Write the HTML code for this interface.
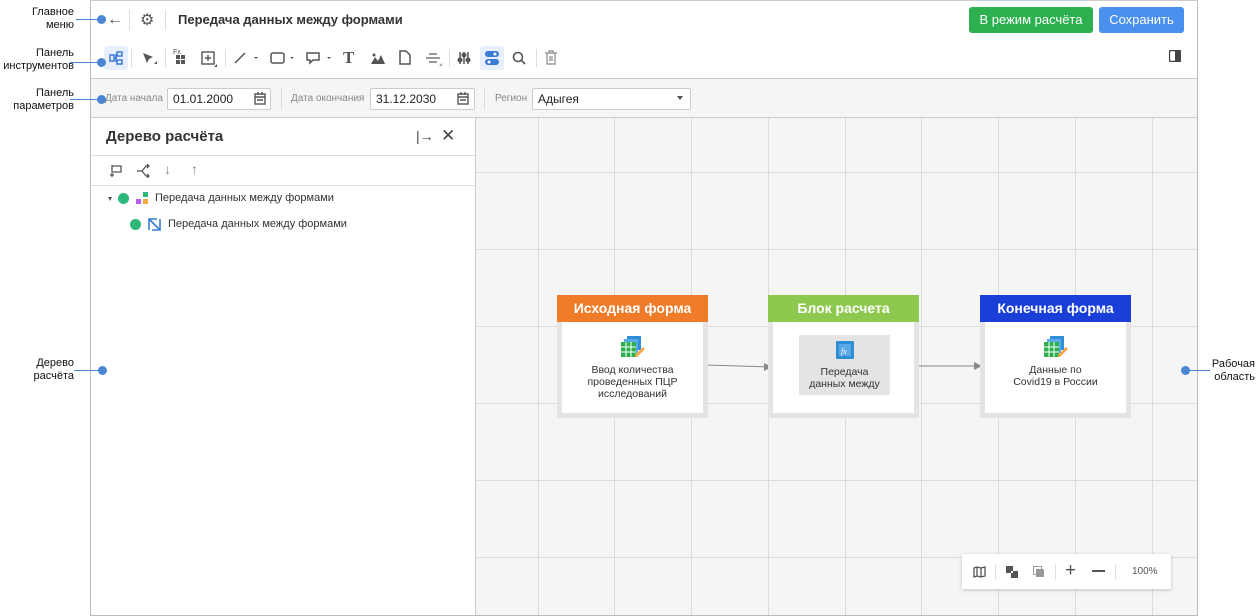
<!DOCTYPE html>
<html><head><meta charset="utf-8"><style>
*{box-sizing:border-box;margin:0;padding:0}
body{width:1256px;height:616px;background:#fff;font-family:"Liberation Sans",sans-serif;position:relative;overflow:hidden;color:#333}
.a{position:absolute}
.lbl{position:absolute;font-size:11px;line-height:13px;color:#111;text-align:right}
.dot{position:absolute;width:9px;height:9px;border-radius:50%;background:#4a86d4}
.ln{position:absolute;height:1px;background:#4a86d4}
.sep{position:absolute;width:1px;background:#ddd}
.ic{position:absolute}
.vl{position:absolute;top:118px;width:1px;height:497px;background:#dcdcdc}
.hl{position:absolute;left:476px;width:721px;height:1px;background:#dcdcdc}
.node{position:absolute;width:151px;height:123px;background:#e4e4e4}
.node .h{height:27px;color:#fff;font-weight:bold;font-size:14px;text-align:center;line-height:27px}
.node .b{position:absolute;left:5px;right:5px;top:27px;bottom:5px;background:#fff;text-align:center;font-size:10.5px;line-height:12px;color:#333}
.field{position:absolute;height:22px;border:1px solid #ccc;border-radius:2px;background:#fff;font-size:12px;line-height:20px;padding-left:5px;color:#222}
.plbl{position:absolute;font-size:10px;color:#888;top:93px}
</style></head><body>
<!-- frame -->
<div class="a" style="left:90px;top:0;width:1px;height:616px;background:#bbb"></div>
<div class="a" style="left:1197px;top:0;width:1px;height:616px;background:#bbb"></div>
<div class="a" style="left:90px;top:0;width:1108px;height:1px;background:#ccc"></div>
<div class="a" style="left:90px;top:615px;width:1108px;height:1px;background:#bbb"></div>
<!-- header -->
<div class="a" style="left:107px;top:11px;font-size:16px;color:#555">&#8592;</div>
<div class="sep" style="left:129px;top:10px;height:20px"></div>
<div class="a" style="left:140px;top:10px;font-size:16px;color:#555">&#9881;</div>
<div class="sep" style="left:165px;top:10px;height:20px"></div>
<div class="a" style="left:178px;top:12px;font-size:13px;font-weight:bold;color:#333">Передача данных между формами</div>
<div class="a" style="left:969px;top:7px;width:124px;height:26px;background:#2db150;border-radius:3px;color:#fff;font-size:13px;text-align:center;line-height:26px">В режим расчёта</div>
<div class="a" style="left:1099px;top:7px;width:85px;height:26px;background:#4a90ee;border-radius:3px;color:#fff;font-size:13px;text-align:center;line-height:26px">Сохранить</div>
<!-- toolbar -->
<div class="a" style="left:104px;top:46px;width:24px;height:24px;background:#e6effb;border-radius:3px"></div>
<svg class="ic" style="left:109px;top:51px" width="14" height="14" viewBox="0 0 14 14" fill="none" stroke="#3a7bd5" stroke-width="1.5"><rect x="1" y="4" width="4" height="6"/><rect x="8" y="1" width="5" height="4"/><rect x="8" y="9" width="5" height="4"/><path d="M5 7h3M7 3v8"/></svg>
<div class="sep" style="left:131px;top:49px;height:18px"></div>
<svg class="ic" style="left:141px;top:51px" width="16" height="16" viewBox="0 0 16 16"><path d="M2 2l10 4-4 2-2 4z" fill="#555"/><path d="M13 13h3v-3z" fill="#555"/></svg>
<div class="sep" style="left:165px;top:49px;height:18px"></div>
<div class="a" style="left:173px;top:49px;font-size:7px;color:#555">Fx</div>
<svg class="ic" style="left:176px;top:55px" width="10" height="10"><rect x="0" y="0" width="4" height="4" fill="#555"/><rect x="5" y="0" width="4" height="4" fill="#555"/><rect x="0" y="5" width="4" height="4" fill="#555"/><rect x="5" y="5" width="4" height="4" fill="#555"/></svg>
<svg class="ic" style="left:201px;top:51px" width="16" height="16" viewBox="0 0 16 16" fill="none" stroke="#555" stroke-width="1.4"><rect x="1" y="1" width="12" height="12"/><path d="M7 4v6M4 7h6"/><path d="M14 16h2v-2z" fill="#555"/></svg>
<div class="sep" style="left:225px;top:49px;height:18px"></div>
<svg class="ic" style="left:234px;top:51px" width="28" height="14" fill="none" stroke="#555" stroke-width="1.5"><path d="M1 12L11 2"/><path d="M20 6l2 2 2-2z" fill="#555" stroke="none"/></svg>
<svg class="ic" style="left:270px;top:51px" width="28" height="14" fill="none" stroke="#555" stroke-width="1.5"><rect x="1" y="2" width="13" height="10" rx="2"/><path d="M20 6l2 2 2-2z" fill="#555" stroke="none"/></svg>
<svg class="ic" style="left:306px;top:51px" width="28" height="14" fill="none" stroke="#555" stroke-width="1.5"><path d="M1 2h12v7H7l-3 3V9H1z"/><path d="M21 6l2 2 2-2z" fill="#555" stroke="none"/></svg>
<div class="a" style="left:343px;top:48px;font-size:17px;font-weight:bold;font-family:'Liberation Serif',serif;color:#555">T</div>
<svg class="ic" style="left:371px;top:52px" width="14" height="12"><path d="M0 12L4 5l3 4 3-6 4 9z" fill="#555"/><circle cx="3" cy="3" r="1.5" fill="#555"/></svg>
<svg class="ic" style="left:399px;top:50px" width="12" height="15" fill="none" stroke="#555" stroke-width="1.5"><path d="M1 1h6l4 4v9H1z"/></svg>
<svg class="ic" style="left:426px;top:52px" width="16" height="14" fill="#999"><rect x="0" y="5" width="14" height="2"/><rect x="3" y="1" width="8" height="2"/><rect x="3" y="9" width="8" height="2"/><path d="M13 14h3v-3z"/></svg>
<div class="sep" style="left:449px;top:49px;height:18px"></div>
<svg class="ic" style="left:457px;top:51px" width="14" height="14" stroke="#555" stroke-width="1.5" fill="#555"><path d="M3 1v12M11 1v12M7 1v12"/><circle cx="3" cy="9" r="1.8"/><circle cx="7" cy="4" r="1.8"/><circle cx="11" cy="9" r="1.8"/></svg>
<div class="a" style="left:480px;top:46px;width:24px;height:24px;background:#e6effb;border-radius:3px"></div>
<svg class="ic" style="left:485px;top:51px" width="14" height="14"><rect x="0" y="0" width="14" height="6" rx="3" fill="#3a7bd5"/><rect x="0" y="8" width="14" height="6" rx="3" fill="#3a7bd5"/><circle cx="10" cy="3" r="1.5" fill="#fff"/><circle cx="4" cy="11" r="1.5" fill="#fff"/></svg>
<svg class="ic" style="left:512px;top:51px" width="14" height="14" fill="none" stroke="#555" stroke-width="1.6"><circle cx="6" cy="6" r="4.5"/><path d="M9 9l4 4"/></svg>
<div class="sep" style="left:536px;top:49px;height:18px"></div>
<svg class="ic" style="left:545px;top:50px" width="12" height="15" fill="none" stroke="#999" stroke-width="1.4"><path d="M0 3h12M4 3V1h4v2M2 3v11h8V3M5 6v5M7 6v5"/></svg>
<svg class="ic" style="left:1169px;top:50px" width="12" height="12"><rect x="0.5" y="0.5" width="11" height="11" rx="1" fill="none" stroke="#444" stroke-width="1.4"/><rect x="6" y="1" width="5" height="10" fill="#444"/></svg>
<div class="a" style="left:91px;top:78px;width:1106px;height:1px;background:#ccc"></div>
<!-- params -->
<div class="a" style="left:91px;top:79px;width:1106px;height:38px;background:#f5f5f5"></div>
<div class="plbl" style="left:105px">Дата начала</div>
<div class="field" style="left:167px;top:88px;width:104px">01.01.2000</div>
<svg class="ic" style="left:254px;top:92px" width="12" height="13" fill="none" stroke="#555" stroke-width="1.4"><rect x="1" y="2" width="10" height="10"/><path d="M1 5h10M4 0v3M8 0v3M3 8h6"/></svg>
<div class="sep" style="left:281px;top:88px;height:22px"></div>
<div class="plbl" style="left:291px">Дата окончания</div>
<div class="field" style="left:370px;top:88px;width:105px">31.12.2030</div>
<svg class="ic" style="left:457px;top:92px" width="12" height="13" fill="none" stroke="#555" stroke-width="1.4"><rect x="1" y="2" width="10" height="10"/><path d="M1 5h10M4 0v3M8 0v3M3 8h6"/></svg>
<div class="sep" style="left:484px;top:88px;height:22px"></div>
<div class="plbl" style="left:495px">Регион</div>
<div class="field" style="left:532px;top:88px;width:159px">Адыгея</div>
<div class="a" style="left:677px;top:96px;width:0;height:0;border-left:3px solid transparent;border-right:3px solid transparent;border-top:4px solid #555"></div>
<div class="a" style="left:91px;top:117px;width:1106px;height:1px;background:#ccc"></div>
<!-- tree panel -->
<div class="a" style="left:106px;top:128px;font-size:15px;font-weight:bold;color:#333">Дерево расчёта</div>
<div class="a" style="left:416px;top:128px;font-size:14px;color:#444">|&#8594;</div>
<div class="a" style="left:441px;top:126px;font-size:17px;color:#444">&#10005;</div>
<div class="a" style="left:91px;top:155px;width:384px;height:1px;background:#ddd"></div>
<svg class="ic" style="left:109px;top:164px" width="14" height="14" fill="none" stroke="#555" stroke-width="1.3"><path d="M3 1v7h9V2H3M1 11h4M3 9v4"/></svg>
<svg class="ic" style="left:136px;top:164px" width="16" height="14" fill="none" stroke="#555" stroke-width="1.3"><path d="M1 7h5l4-5h3M6 7l4 5h3M11 0l2 2-2 2M11 10l2 2-2 2"/></svg>
<div class="a" style="left:164px;top:161px;font-size:14px;color:#888">&#8595;</div>
<div class="a" style="left:191px;top:161px;font-size:14px;color:#888">&#8593;</div>
<div class="a" style="left:91px;top:185px;width:384px;height:1px;background:#ddd"></div>
<div class="a" style="left:108px;top:197px;width:0;height:0;border-left:2.5px solid transparent;border-right:2.5px solid transparent;border-top:4px solid #555"></div>
<div class="a" style="left:118px;top:193px;width:11px;height:11px;border-radius:50%;background:#2db87a"></div>
<svg class="ic" style="left:136px;top:192px" width="13" height="13"><rect x="7" y="0" width="5" height="5" fill="#2db87a"/><rect x="0" y="7" width="5" height="5" fill="#b660f0"/><rect x="7" y="7" width="5" height="5" fill="#f4a742"/></svg>
<div class="a" style="left:155px;top:192px;font-size:11px;color:#333">Передача данных между формами</div>
<div class="a" style="left:130px;top:219px;width:11px;height:11px;border-radius:50%;background:#2db87a"></div>
<svg class="ic" style="left:148px;top:218px" width="13" height="13" fill="none" stroke="#3a7bd5" stroke-width="1.6"><path d="M1 12V1h8M12 1v11H4M1 1l11 11"/></svg>
<div class="a" style="left:168px;top:218px;font-size:11px;color:#333">Передача данных между формами</div>
<div class="a" style="left:475px;top:118px;width:1px;height:497px;background:#ccc"></div>
<!-- canvas -->
<div class="a" style="left:476px;top:118px;width:721px;height:497px;background:#f5f5f5"></div>
<div class="vl" style="left:538px"></div><div class="vl" style="left:614px"></div><div class="vl" style="left:691px"></div><div class="vl" style="left:768px"></div><div class="vl" style="left:845px"></div><div class="vl" style="left:921px"></div><div class="vl" style="left:998px"></div><div class="vl" style="left:1075px"></div><div class="vl" style="left:1152px"></div>
<div class="hl" style="top:172px"></div><div class="hl" style="top:249px"></div><div class="hl" style="top:326px"></div><div class="hl" style="top:403px"></div><div class="hl" style="top:480px"></div><div class="hl" style="top:557px"></div>
<!-- arrows -->
<svg class="ic" style="left:706px;top:360px" width="280" height="14"><path d="M0 5L64 7" stroke="#888" stroke-width="1"/><path d="M58 3l8 4-8 4z" fill="#888"/><path d="M212 6h64" stroke="#888" stroke-width="1"/><path d="M268 2l8 4-8 4z" fill="#888"/></svg>
<!-- nodes -->
<div class="node" style="left:557px;top:295px"><div class="h" style="background:#f07c2a">Исходная форма</div><div class="b">
<svg style="margin-top:14px" width="24" height="22"><rect x="6" y="0" width="14" height="14" fill="#2f8fd6"/><rect x="3" y="3" width="14" height="14" fill="#5aa8e6"/><rect x="0" y="6" width="15" height="15" fill="#2db150"/><path d="M0 11h15M0 16h15M5 6v15M10 6v15" stroke="#fff" stroke-width="1"/><path d="M14 19l8-8 2 2-8 8h-2z" fill="#f4a742"/></svg>
<div style="margin-top:3px">Ввод количества<br>проведенных ПЦР<br>исследований</div></div></div>
<div class="node" style="left:768px;top:295px"><div class="h" style="background:#8dc94e">Блок расчета</div><div class="b">
<div style="position:absolute;left:26px;top:13px;width:91px;height:60px;background:#e4e4e4">
<svg style="margin-top:6px" width="18" height="18"><rect x="0" y="0" width="18" height="18" rx="1" fill="#2f8fd6"/><rect x="3" y="3" width="12" height="12" fill="#5aa8e6"/><text x="5" y="13" font-size="8" fill="#fff" font-style="italic" font-family="Liberation Serif">fx</text></svg>
<div style="margin-top:4px">Передача<br>данных между</div></div></div></div>
<div class="node" style="left:980px;top:295px"><div class="h" style="background:#1a3fd8">Конечная форма</div><div class="b">
<svg style="margin-top:14px" width="24" height="22"><rect x="6" y="0" width="14" height="14" fill="#2f8fd6"/><rect x="3" y="3" width="14" height="14" fill="#5aa8e6"/><rect x="0" y="6" width="15" height="15" fill="#2db150"/><path d="M0 11h15M0 16h15M5 6v15M10 6v15" stroke="#fff" stroke-width="1"/><path d="M14 19l8-8 2 2-8 8h-2z" fill="#f4a742"/></svg>
<div style="margin-top:3px">Данные по<br>Covid19 в России</div></div></div>
<!-- zoom bar -->
<div class="a" style="left:962px;top:554px;width:209px;height:35px;background:#fff;box-shadow:0 1px 4px rgba(0,0,0,.2)"></div>
<svg class="ic" style="left:973px;top:566px" width="13" height="12" fill="none" stroke="#555" stroke-width="1.3"><path d="M1 2l3-1 4 1 4-1v9l-4 1-4-1-3 1zM4 1v9M8 2v9"/></svg>
<div class="sep" style="left:995px;top:564px;height:16px"></div>
<svg class="ic" style="left:1006px;top:566px" width="13" height="13"><rect x="0" y="0" width="7" height="7" fill="#555"/><rect x="5" y="5" width="7" height="7" fill="#555"/><rect x="5" y="5" width="2" height="2" fill="#fff"/></svg>
<svg class="ic" style="left:1033px;top:566px" width="13" height="13"><rect x="0.5" y="0.5" width="8" height="8" fill="none" stroke="#999"/><rect x="3" y="3" width="8" height="8" fill="#999"/></svg>
<div class="sep" style="left:1055px;top:564px;height:16px"></div>
<div class="a" style="left:1065px;top:560px;font-size:19px;color:#555">+</div>
<div class="a" style="left:1092px;top:570px;width:13px;height:1.5px;background:#555"></div>
<div class="sep" style="left:1115px;top:564px;height:16px"></div>
<div class="a" style="left:1132px;top:566px;font-size:10px;color:#555">100%</div>
<!-- callouts -->
<div class="lbl" style="left:0;top:6px;width:74px">Главное<br>меню</div>
<div class="ln" style="left:76px;top:19px;width:24px"></div><div class="dot" style="left:97px;top:15px"></div>
<div class="lbl" style="left:0;top:47px;width:74px">Панель<br>инструментов</div>
<div class="ln" style="left:70px;top:62px;width:30px"></div><div class="dot" style="left:97px;top:58px"></div>
<div class="lbl" style="left:0;top:87px;width:74px">Панель<br>параметров</div>
<div class="ln" style="left:70px;top:99px;width:30px"></div><div class="dot" style="left:97px;top:95px"></div>
<div class="lbl" style="left:0;top:357px;width:74px">Дерево<br>расчёта</div>
<div class="ln" style="left:74px;top:370px;width:26px"></div><div class="dot" style="left:98px;top:366px"></div>
<div class="lbl" style="left:1200px;top:358px;width:55px">Рабочая<br>область</div>
<div class="ln" style="left:1186px;top:370px;width:24px"></div><div class="dot" style="left:1181px;top:366px"></div>
</body></html>
